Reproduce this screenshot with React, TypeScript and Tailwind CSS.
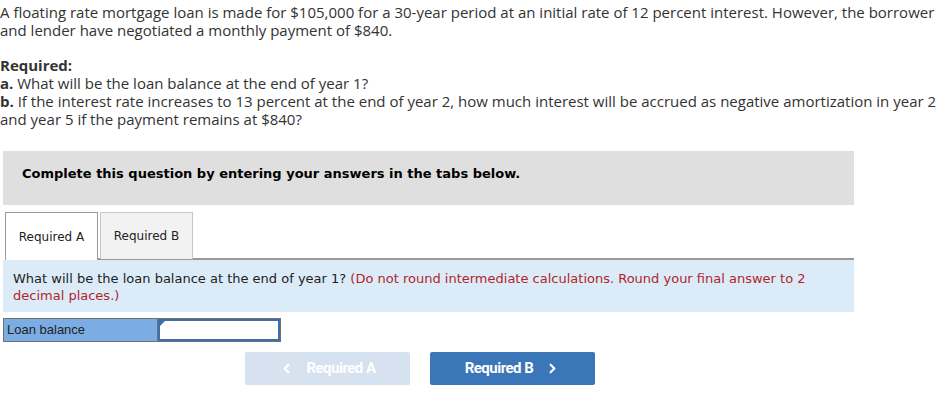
import React from "react";
import { ChevronLeft, ChevronRight } from "lucide-react";

export default function App() {
  return (
    <div className="w-[944px] h-[403px] bg-white overflow-hidden relative">
      <div className="text-[15px] leading-[18px] text-[#333] pt-[3px]" style={{ fontFamily: '"Open Sans", sans-serif' }}>
        <p>
          A floating rate mortgage loan is made for $105,000 for a 30-year period at an initial rate of 12 percent interest. However, the borrower and lender have negotiated a monthly payment of $840.
        </p>
        <p className="mt-[17px] font-bold">Required:</p>
        <p>
          <b>a.</b> What will be the loan balance at the end of year 1?
        </p>
        <p>
          <b>b.</b> If the interest rate increases to 13 percent at the end of year 2, how much interest will be accrued as negative amortization in year 2 and year 5 if the payment remains at $840?
        </p>
      </div>
      <div className="ml-[3px] mt-[23px] w-[851px] h-[54px] bg-[#dfdfdf] flex items-center pl-[19px] pb-[8px]">
        <span className="text-[13px] font-bold text-black" style={{ fontFamily: '"DejaVu Sans", Verdana, sans-serif' }}>
          Complete this question by entering your answers in the tabs below.
        </span>
      </div>
      <div className="ml-[5px] mt-[7px] w-[849px] flex items-end border-b-[2px] border-[#999] h-[48px]" style={{ fontFamily: '"DejaVu Sans", Verdana, sans-serif' }}>
        <div className="w-[93px] h-[48px] -mb-[2px] bg-white border border-[#999] border-b-0 flex items-center justify-center text-[12px] text-[#222]">
          Required A
        </div>
        <div className="ml-[2px] w-[93px] h-[47px] -mb-[1px] bg-[#f2f2f2] border border-[#c6c6c6] border-b-0 flex items-center justify-center text-[12px] text-[#222]">
          Required B
        </div>
      </div>
      <div className="ml-[3px] w-[851px] h-[52px] bg-[#dbecf8] pl-[10px] pt-[10px] text-[13px] leading-[17px]" style={{ fontFamily: '"DejaVu Sans", Verdana, sans-serif' }}>
        <span className="text-[#222]">What will be the loan balance at the end of year 1? </span>
        <span className="text-[#b3242a]">(Do not round intermediate calculations. Round your final answer to 2 decimal places.)</span>
      </div>
      <div className="ml-[3px] mt-[6px] flex w-[278px] h-[24px] border border-[#707070]" style={{ fontFamily: '"Liberation Sans", Arial, sans-serif' }}>
        <div className="w-[154px] bg-[#7badE4] flex items-center pl-[3px] text-[13px] text-[#222] border-r border-[#707070]">Loan balance</div>
        <div className="flex-1 bg-white border-[2px] border-[#3d6fa8] relative">
          <div className="absolute left-0 top-0 w-0 h-0 border-t-[5px] border-t-[#3d6fa8] border-r-[5px] border-r-transparent" />
        </div>
      </div>
      <div className="flex mt-[10px] ml-[245px] gap-[20px]" style={{ fontFamily: 'Roboto, sans-serif' }}>
        <div className="w-[165px] h-[33px] rounded-[2px] bg-[#d6e2f0] flex items-center justify-center text-white font-bold text-[15px] tracking-[-0.5px]">
          <ChevronLeft size={15} strokeWidth={3.5} className="mr-[12px]" />Required A
        </div>
        <div className="w-[165px] h-[33px] rounded-[2px] bg-[#3a76b8] flex items-center justify-center text-white font-bold text-[15px] tracking-[-0.5px]">
          Required B<ChevronRight size={15} strokeWidth={3.5} className="ml-[12px]" />
        </div>
      </div>
    </div>
  );
}
